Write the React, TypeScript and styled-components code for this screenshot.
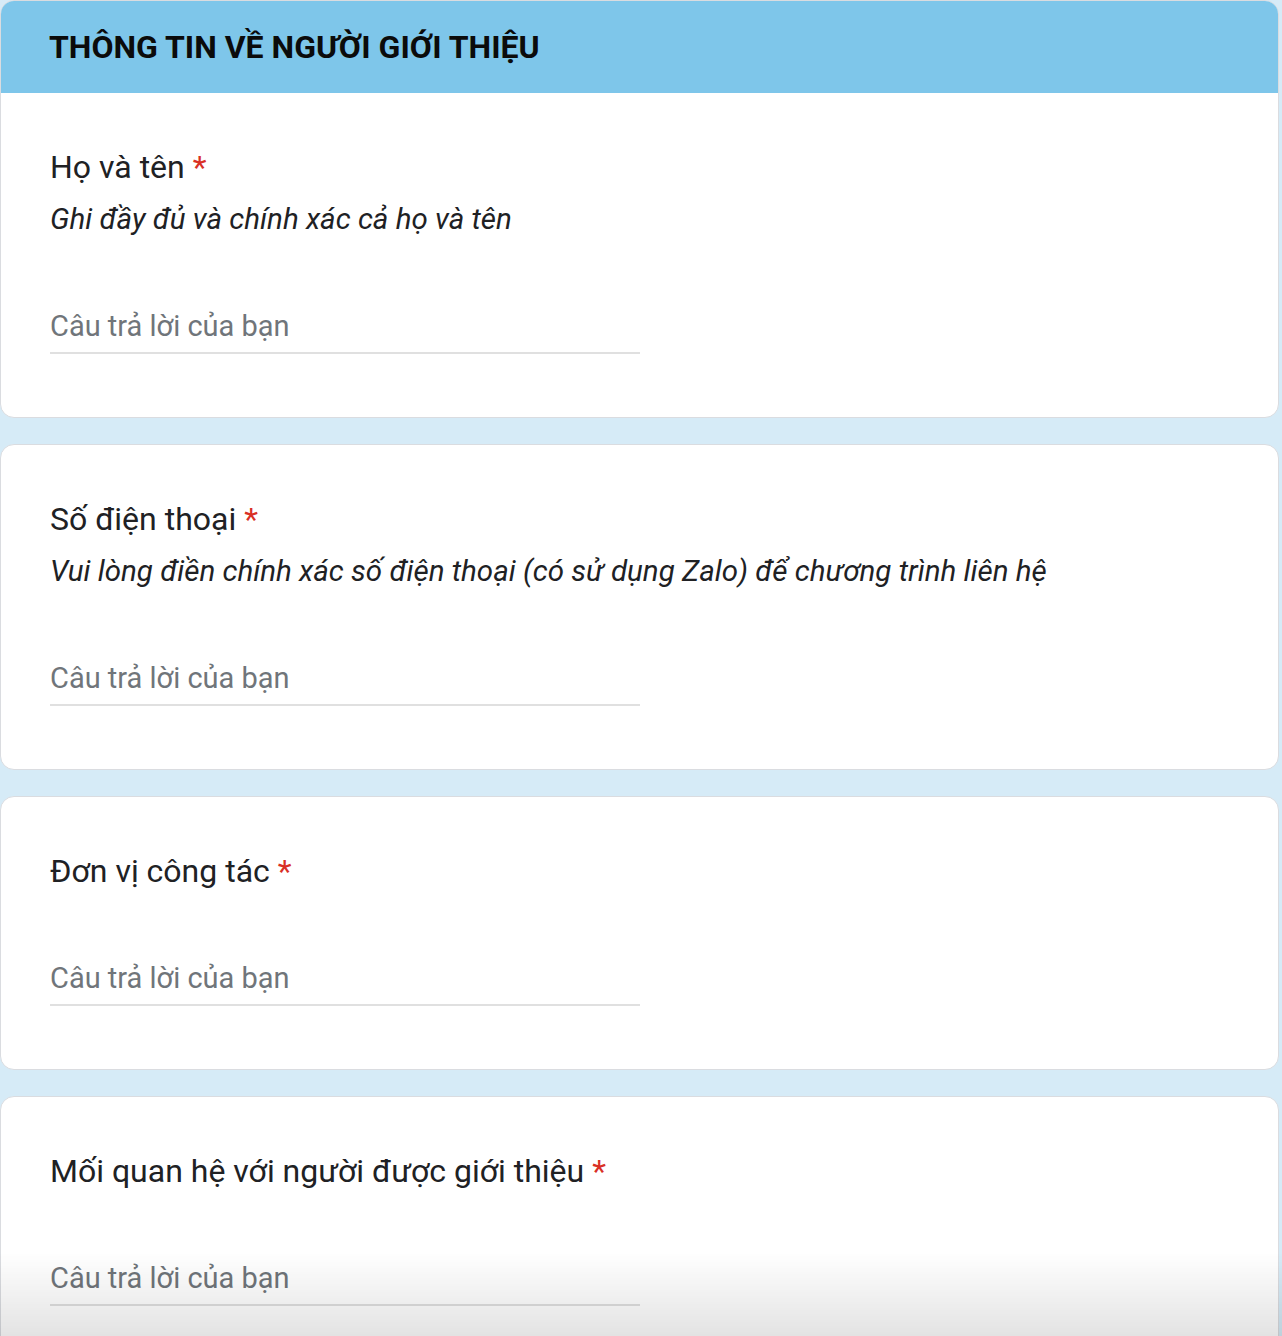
import React from "react";
import styled, { createGlobalStyle } from "styled-components";

const GlobalStyle = createGlobalStyle`
  html, body {
    margin: 0;
    padding: 0;
    background: #d6ebf7;
  }
  body {
    font-family: Roboto, "Noto Sans", Arial, sans-serif;
    color: #202124;
  }
`;

const Page = styled.div`
  display: flex;
  flex-direction: column;
  gap: 26px;
  padding: 0 3px 40px 0;
`;

const Card = styled.section`
  background: #ffffff;
  border: 1px solid #dadce0;
  border-radius: 14px;
  overflow: hidden;
`;

const SectionHeader = styled.div`
  background: #7ec6ea;
  height: 93px;
  display: flex;
  align-items: center;
  padding: 0 49px;
  margin: -1px -1px 0;

  h1 {
    margin: 0;
    font-size: 32px;
    font-weight: 700;
    color: #0b0b0b;
  }
`;

const Body = styled.div`
  display: flex;
  flex-direction: column;
  padding: 50px 49px 63px;
`;

const Title = styled.div`
  font-size: 32px;
  line-height: 48px;
  color: #202124;

  span {
    color: #d93025;
    margin-left: 8px;
  }
`;

const Description = styled.div`
  font-size: 29.5px;
  line-height: 48px;
  font-style: italic;
  margin-top: 4px;
  color: #202124;
`;

const AnswerInput = styled.input`
  width: 590px;
  box-sizing: border-box;
  margin-top: 63px;
  padding: 0 0 6px;
  height: 48px;
  line-height: 40px;
  font-family: Roboto, "Noto Sans", Arial, sans-serif;
  font-size: 29px;
  color: #202124;
  border: none;
  border-bottom: 2px solid #e0e0e0;
  outline: none;
  background: transparent;

  &::placeholder {
    color: #70757a;
  }
`;

const BottomShade = styled.div`
  position: fixed;
  left: 0;
  right: 0;
  bottom: 0;
  height: 84px;
  pointer-events: none;
  background: linear-gradient(rgba(0, 0, 0, 0), rgba(0, 0, 0, 0.11));
`;

type Question = {
  title: string;
  description?: string;
};

const questions: Question[] = [
  { title: "Họ và tên", description: "Ghi đầy đủ và chính xác cả họ và tên" },
  {
    title: "Số điện thoại",
    description:
      "Vui lòng điền chính xác số điện thoại (có sử dụng Zalo) để chương trình liên hệ"
  },
  { title: "Đơn vị công tác" },
  { title: "Mối quan hệ với người được giới thiệu" }
];

const QuestionBody = ({ title, description }: Question) => (
  <Body>
    <Title>
      {title}
      <span>*</span>
    </Title>
    {description && <Description>{description}</Description>}
    <AnswerInput type="text" placeholder="Câu trả lời của bạn" />
  </Body>
);

const App = () => {
  return (
    <>
      <GlobalStyle />
      <Page>
        {questions.map((q, i) => (
          <Card key={q.title}>
            {i === 0 && (
              <SectionHeader>
                <h1>THÔNG TIN VỀ NGƯỜI GIỚI THIỆU</h1>
              </SectionHeader>
            )}
            <QuestionBody {...q} />
          </Card>
        ))}
      </Page>
      <BottomShade />
    </>
  );
};

export default App;
